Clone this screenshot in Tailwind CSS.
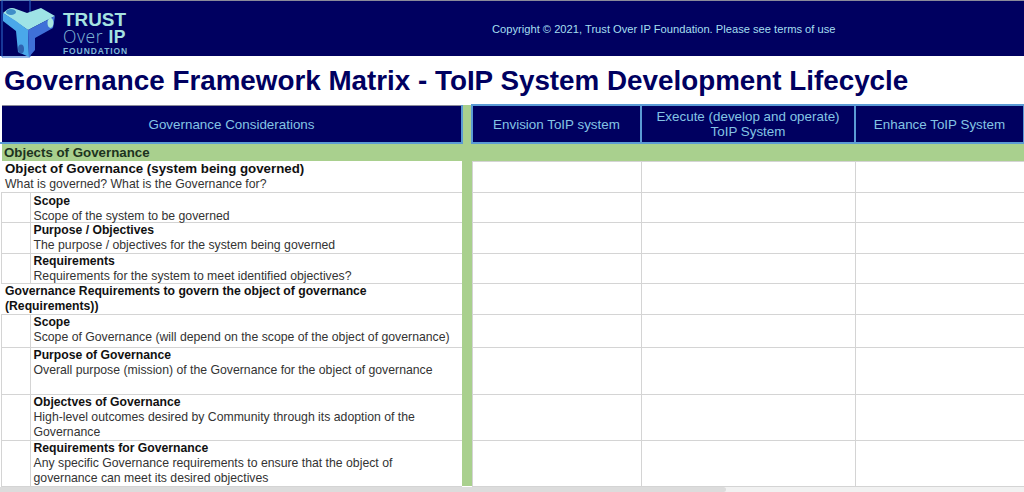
<!DOCTYPE html>
<html><head><meta charset="utf-8"><script src="https://cdn.jsdelivr.net/npm/@tailwindcss/browser@4"></script></head>
<body class="m-0 bg-white overflow-hidden font-['Liberation_Sans',Arial,sans-serif]">
<div class="relative w-[1024px] h-[492px] overflow-hidden">
  <header class="flex h-[56px] bg-[#000060] border-t border-[#8a8a9a]">
    <div class="relative w-[130px] h-[55px] shrink-0">
      <svg class="absolute left-0 top-[-1px]" width="60" height="58" viewBox="0 0 60 58">
        <path d="M2 0H30V57H2Z" fill="none" stroke="#2f6fd0" stroke-width="1"/>
        <path d="M3 13L8 9Q12 7 16 9L27 13L41 8L55 16L28 30Z" fill="#9ee3e6"/>
        <path d="M3 13L16 21L28 30L29 57L18 52L16 31L3 21Z" fill="#4aa8ea"/>
        <path d="M28 30L55 16L53 28L35 38V50L29 57Z" fill="#3f70d8"/>
        <ellipse cx="11" cy="12" rx="5" ry="3" fill="#3f8fc8"/>
        <ellipse cx="50.500" cy="23" rx="3" ry="5" fill="#a8e6e0"/>
        <ellipse cx="21" cy="49" rx="3" ry="4.500" fill="#2f62b0"/>
      </svg>
      <div class="absolute left-[63px] top-[12px] text-[18.900px] leading-[14px] font-bold text-[#a5e3e0]">TRUST</div>
      <div class="absolute left-[63px] top-[28px] text-[17.500px] leading-[15px] tracking-[0.6px] text-[#7fb7d6] whitespace-nowrap font-['Open_Sans',sans-serif] font-light">Over <span class="font-bold text-[#a5e3e0] font-['Liberation_Sans',sans-serif]">IP</span></div>
      <div class="absolute left-[63px] top-[46px] text-[8.500px] leading-[8px] tracking-[0.9px] font-bold text-[#7fb7d6]">FOUNDATION</div>
    </div>
    <p class="ml-[362px] pt-[21px] text-[11.160px] leading-[14px] text-[#a5dff0] whitespace-nowrap">Copyright © 2021, Trust Over IP Foundation. Please see terms of use</p>
  </header>
  <h1 class="h-[48px] pl-[4px] pt-[8px] text-[27.800px] leading-[34px] font-bold text-[#000060] whitespace-nowrap">Governance Framework Matrix - ToIP System Development Lifecycle</h1>
  <table class="table-fixed border-collapse w-[1023px] text-[12.200px] leading-[15px] text-[#333]">
    <colgroup><col class="w-[29px]"><col class="w-[432px]"><col class="w-[10px]"><col class="w-[169px]"><col class="w-[214px]"><col class="w-[169px]"></colgroup>
    <thead>
      <tr class="h-[38px] bg-[#000060] text-[#84c4e4] text-[13.400px] leading-[15px] font-normal">
        <th colspan="2" class="font-normal text-center pt-[2px] border-2 border-t border-l-2 border-l-white border-t-[#8a8a9a] border-b-[#5b9bd5] border-r-[#5b9bd5]">Governance Considerations</th>
        <th class="bg-[#a9d08e] border-0"></th>
        <th class="font-normal text-center border-2 border-[#5b9bd5]">Envision ToIP system</th>
        <th class="font-normal text-center border-2 border-[#5b9bd5] px-2">Execute (develop and operate) ToIP System</th>
        <th class="font-normal text-center border-2 border-[#5b9bd5]">Enhance ToIP System</th>
      </tr>
    </thead>
    <tbody>
      <tr class="h-[18px] bg-[#a9d08e]"><td colspan="6" class="p-0 pl-[2px] border-l-2 border-l-white font-bold text-[13.300px] leading-[15px] text-[#1d3320] whitespace-nowrap">Objects of Governance</td></tr>
      <tr class="h-[31px]">
        <td colspan="2" class="p-0 pl-[4px] align-top border-b border-[#d4d4d4]"><div class="font-bold text-[13.300px] leading-[16px] text-[#111]">Object of Governance (system being governed)</div><div class="text-[12.250px] leading-[15px] h-[14px]">What is governed? What is the Governance for?</div></td>
        <td class="p-0 bg-[#a9d08e]"></td><td class="border border-[#d4d4d4]"></td><td class="border border-[#d4d4d4]"></td><td class="border-y border-l border-[#d4d4d4]"></td>
      </tr>
      <tr class="h-[30px]">
        <td class="border border-[#d4d4d4]"></td>
        <td class="p-0 pl-[3px] pt-[1px] align-top border-y border-[#d4d4d4]"><div class="font-bold text-[#111]">Scope</div><div class="text-[12.250px] h-[13px]">Scope of the system to be governed</div></td>
        <td class="p-0 bg-[#a9d08e]"></td><td class="border border-[#d4d4d4]"></td><td class="border border-[#d4d4d4]"></td><td class="border-y border-l border-[#d4d4d4]"></td>
      </tr>
      <tr class="h-[31px]">
        <td class="border border-[#d4d4d4]"></td>
        <td class="p-0 pl-[3px] align-top border-y border-[#d4d4d4]"><div class="font-bold text-[#111]">Purpose / Objectives</div><div class="text-[12.250px]">The purpose / objectives for the system being governed</div></td>
        <td class="p-0 bg-[#a9d08e]"></td><td class="border border-[#d4d4d4]"></td><td class="border border-[#d4d4d4]"></td><td class="border-y border-l border-[#d4d4d4]"></td>
      </tr>
      <tr class="h-[30px]">
        <td class="border border-[#d4d4d4]"></td>
        <td class="p-0 pl-[3px] align-top border-y border-[#d4d4d4]"><div class="font-bold text-[#111]">Requirements</div><div class="text-[12.250px] h-[14px]">Requirements for the system to meet identified objectives?</div></td>
        <td class="p-0 bg-[#a9d08e]"></td><td class="border border-[#d4d4d4]"></td><td class="border border-[#d4d4d4]"></td><td class="border-y border-l border-[#d4d4d4]"></td>
      </tr>
      <tr class="h-[31px]">
        <td colspan="2" class="p-0 pl-[4px] align-top border-y border-[#d4d4d4] font-bold text-[#111]">Governance Requirements to govern the object of governance<br>(Requirements))</td>
        <td class="p-0 bg-[#a9d08e]"></td><td class="border border-[#d4d4d4]"></td><td class="border border-[#d4d4d4]"></td><td class="border-y border-l border-[#d4d4d4]"></td>
      </tr>
      <tr class="h-[33px]">
        <td class="border border-[#d4d4d4]"></td>
        <td class="p-0 pl-[3px] align-top border-y border-[#d4d4d4]"><div class="font-bold text-[#111]">Scope</div><div class="text-[12.250px]">Scope of Governance (will depend on the scope of the object of governance)</div></td>
        <td class="p-0 bg-[#a9d08e]"></td><td class="border border-[#d4d4d4]"></td><td class="border border-[#d4d4d4]"></td><td class="border-y border-l border-[#d4d4d4]"></td>
      </tr>
      <tr class="h-[47px]">
        <td class="border border-[#d4d4d4]"></td>
        <td class="p-0 pl-[3px] align-top border-y border-[#d4d4d4]"><div class="font-bold text-[#111]">Purpose of Governance</div><div class="text-[12.250px]">Overall purpose (mission) of the Governance for the object of governance</div></td>
        <td class="p-0 bg-[#a9d08e]"></td><td class="border border-[#d4d4d4]"></td><td class="border border-[#d4d4d4]"></td><td class="border-y border-l border-[#d4d4d4]"></td>
      </tr>
      <tr class="h-[46px]">
        <td class="border border-[#d4d4d4]"></td>
        <td class="p-0 pl-[3px] align-top border-y border-[#d4d4d4]"><div class="font-bold text-[#111]">Objectves of Governance</div><div class="text-[12.250px]">High-level outcomes desired by Community through its adoption of the<br>Governance</div></td>
        <td class="p-0 bg-[#a9d08e]"></td><td class="border border-[#d4d4d4]"></td><td class="border border-[#d4d4d4]"></td><td class="border-y border-l border-[#d4d4d4]"></td>
      </tr>
      <tr class="h-[46px]">
        <td class="border border-[#d4d4d4]"></td>
        <td class="p-0 pl-[3px] align-top border-y border-[#d4d4d4]"><div class="font-bold text-[#111]">Requirements for Governance</div><div class="text-[12.250px]">Any specific Governance requirements to ensure that the object of<br>governance can meet its desired objectives</div></td>
        <td class="p-0 bg-[#a9d08e]"></td><td class="border border-[#d4d4d4]"></td><td class="border border-[#d4d4d4]"></td><td class="border-y border-l border-[#d4d4d4]"></td>
      </tr>
    </tbody>
  </table>
  <div class="absolute left-0 right-0 bottom-0 h-[5px] bg-[#f1f1f1]"><div class="w-[726px] h-full bg-[#dcdcdc] rounded-r-sm"></div></div>
</div>
</body></html>
